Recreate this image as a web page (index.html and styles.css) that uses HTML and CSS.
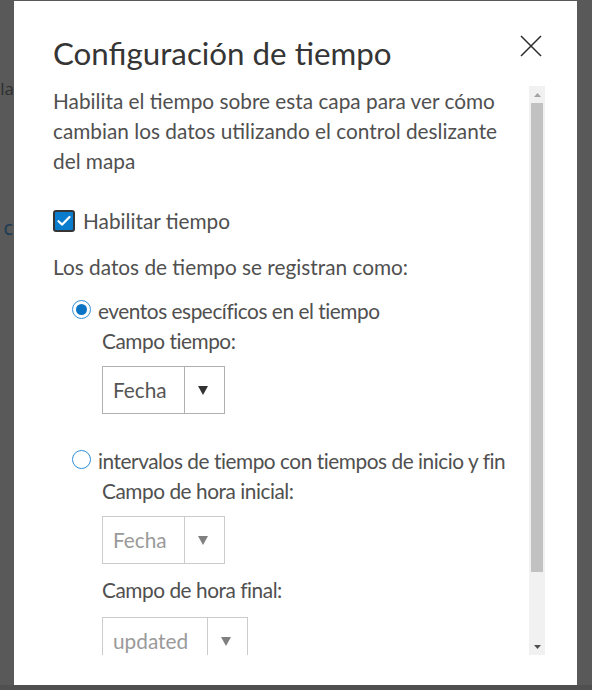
FILE: index.html
```html
<!DOCTYPE html>
<html lang="es">
<head>
<meta charset="utf-8">
<title>Configuración de tiempo</title>
<link rel="stylesheet" href="styles.css">
</head>
<body>
<div class="screen">
  <div class="page-strip">
    <div class="page-text page-text-a">la</div>
    <div class="page-text page-text-b">c</div>
  </div>
  <div class="dialog">
    <div class="dialog-header">
      <h1 class="dialog-title">Configuración de tiempo</h1>
      <button class="close-btn" aria-label="Cerrar">
        <svg width="22" height="22" viewBox="0 0 22 22"><path d="M1 1 L21 21 M21 1 L1 21" stroke="#2b2b2b" stroke-width="1.5" fill="none"/></svg>
      </button>
    </div>
    <div class="scroll-region">
      <div class="scroll-content">
        <p class="intro">Habilita el tiempo sobre esta capa para ver cómo<br>cambian los datos utilizando el control deslizante<br>del mapa</p>
        <label class="check-row">
          <span class="checkbox">
            <svg width="14" height="12" viewBox="0 0 14 12"><path d="M1.5 6.2 L5.2 9.6 L12.5 2" stroke="#fff" stroke-width="2.2" fill="none" stroke-linecap="round" stroke-linejoin="round"/></svg>
          </span>
          <span>Habilitar tiempo</span>
        </label>
        <div class="line">Los datos de tiempo se registran como:</div>
        <div class="radio-row first">
          <span class="radio checked"></span>
          <span class="radio-label">eventos específicos en el tiempo</span>
        </div>
        <div class="field">
          <div class="line field-label">Campo tiempo:</div>
          <div class="select">
            <span class="select-value w-short">Fecha</span>
            <span class="select-arrow"><svg width="10" height="9" viewBox="0 0 10 9"><path d="M0 0 H10 L5 9 Z" fill="#333"/></svg></span>
          </div>
        </div>
        <div class="radio-row second">
          <span class="radio"></span>
          <span class="radio-label">intervalos de tiempo con tiempos de inicio y fin</span>
        </div>
        <div class="field">
          <div class="line field-label">Campo de hora inicial:</div>
          <div class="select disabled">
            <span class="select-value w-short">Fecha</span>
            <span class="select-arrow"><svg width="10" height="9" viewBox="0 0 10 9"><path d="M0 0 H10 L5 9 Z" fill="#808080"/></svg></span>
          </div>
          <div class="line field-label label-gap">Campo de hora final:</div>
          <div class="select disabled final">
            <span class="select-value w-long">updated</span>
            <span class="select-arrow"><svg width="10" height="9" viewBox="0 0 10 9"><path d="M0 0 H10 L5 9 Z" fill="#808080"/></svg></span>
          </div>
        </div>
      </div>
      <div class="scrollbar">
        <div class="sb-btn"><svg width="7" height="4" viewBox="0 0 7 4"><path d="M0 4 L3.5 0 L7 4 Z" fill="#a3a3a3"/></svg></div>
        <div class="sb-track"><div class="sb-thumb"></div></div>
        <div class="sb-btn"><svg width="7" height="4" viewBox="0 0 7 4"><path d="M0 0 L7 0 L3.5 4 Z" fill="#505050"/></svg></div>
      </div>
    </div>
  </div>
  <div class="page-strip right"></div>
</div>
<div class="bottom-bar"></div>
</body>
</html>
```

FILE: styles.css
```css
* { box-sizing: border-box; }
html, body { margin: 0; padding: 0; }
body {
  width: 592px;
  height: 690px;
  overflow: hidden;
  background: #595959;
  font-family: Lato, "Open Sans", sans-serif;
}
.screen {
  display: flex;
  height: 685px;
  padding-top: 1px;
}
.page-strip {
  width: 14px;
  flex: none;
  overflow: hidden;
  display: flex;
  flex-direction: column;
  align-items: flex-end;
}
.page-strip.right { width: 15px; }
.page-text {
  white-space: nowrap;
  font-family: "Open Sans", sans-serif;
}
.page-text-a {
  margin-top: 76px;
  font-size: 17px;
  line-height: 24px;
  color: #2e2e2e;
}
.page-text-b {
  margin-top: 112px;
  font-size: 20px;
  line-height: 30px;
  color: #1d3a55;
  margin-right: 1px;
}
.bottom-bar {
  height: 5px;
  background: #505050;
}
.dialog {
  width: 563px;
  flex: none;
  background: #fff;
  padding: 0 32px 0 39px;
  display: flex;
  flex-direction: column;
}
.dialog-header {
  display: flex;
  justify-content: space-between;
  align-items: flex-start;
  padding-top: 34px;
  margin-bottom: 15px;
}
.dialog-title {
  margin: 0;
  font-weight: 400;
  font-size: 31.3px;
  line-height: 36px;
  color: #353535;
}
.close-btn {
  border: 0;
  background: none;
  padding: 0;
  margin-right: 3px;
  width: 22px;
  height: 22px;
  display: block;
}
.close-btn svg { display: block; }
.scroll-region {
  display: flex;
  height: 569px;
}
.scroll-content {
  flex: 1;
  overflow: hidden;
  font-size: 20.8px;
  line-height: 30px;
  color: #505050;
}
.intro { margin: 0; }
.check-row {
  display: flex;
  align-items: center;
  gap: 8px;
  margin-top: 30px;
  height: 30px;
}
.checkbox {
  width: 22px;
  height: 22px;
  border: 2px solid #353535;
  border-radius: 3px;
  background: #0a7ccd;
  display: flex;
  align-items: center;
  justify-content: center;
}
.checkbox svg { display: block; }
.line { white-space: nowrap; }
.check-row + .line { margin-top: 16px; }
.radio-row {
  display: flex;
  align-items: center;
  gap: 7px;
  padding-left: 19px;
  height: 30px;
  white-space: nowrap;
}
.radio-label, .field-label { letter-spacing: -0.45px; }
.radio-row.first { margin-top: 14px; }
.radio-row.second { margin-top: 32px; }
.radio {
  width: 19px;
  height: 19px;
  border: 1.5px solid #2f8fd6;
  border-radius: 50%;
  background: #fff;
  flex: none;
  position: relative;
  margin-top: -3px;
}
.radio.checked::after {
  content: "";
  position: absolute;
  left: 2.5px;
  top: 2.5px;
  width: 11px;
  height: 11px;
  border-radius: 50%;
  background: #0a74c4;
}
.field { padding-left: 49px; }
.select {
  display: flex;
  width: max-content;
  margin-top: 10px;
  height: 48px;
  border: 1px solid #b0b0b0;
}
.select-value {
  display: flex;
  align-items: center;
  padding-left: 10px;
  color: #555;
}
.w-short { width: 81px; }
.w-long { width: 104px; }
.select-arrow {
  width: 40px;
  border-left: 1px solid #b0b0b0;
  display: flex;
  align-items: center;
  justify-content: center;
}
.select-arrow svg { display: block; margin-left: -4px; }
.select.disabled { border-color: #cccccc; }
.select.disabled .select-arrow { border-left-color: #cccccc; }
.select.disabled .select-value { color: #9a9a9a; }
.label-gap { margin-top: 11px; }
.select.final { margin-top: 12px; }
.scrollbar {
  width: 16px;
  flex: none;
  background: #f1f1f1;
  display: flex;
  flex-direction: column;
}
.sb-btn {
  height: 17px;
  display: flex;
  align-items: center;
  justify-content: center;
}
.sb-btn svg { display: block; }
.sb-track {
  flex: 1;
  padding: 0 2px;
}
.sb-thumb {
  height: 469px;
  background: #c1c1c1;
}
```
